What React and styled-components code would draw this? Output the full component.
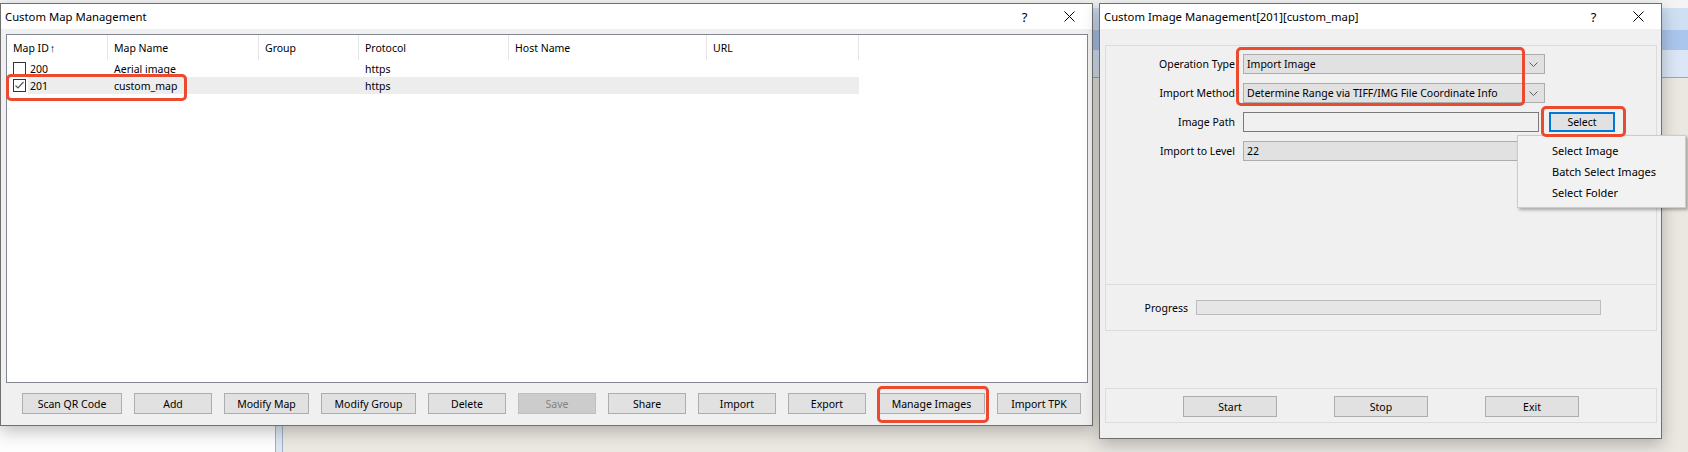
import styled, { createGlobalStyle } from 'styled-components'

const GlobalStyle = createGlobalStyle`
  html, body {
    margin: 0;
    padding: 0;
  }
  body {
    width: 1688px;
    height: 452px;
    overflow: hidden;
    font-family: 'Noto Sans', 'Liberation Sans', sans-serif;
    color: #000;
  }
`

const color = {
  face: '#f0f0f0',
  button: '#e1e1e1',
  buttonBorder: '#adadad',
  frame: '#707070',
  groupLine: '#dcdcdc',
  mark: '#eb4a2f',
  focus: '#0078d7',
}

const Desktop = styled.div`
  position: relative;
  width: 1688px;
  height: 452px;
  box-sizing: border-box;
  padding-top: 3px;
  display: flex;
  align-items: flex-start;
  gap: 6px;
  overflow: hidden;
  background:
    linear-gradient(
      to bottom,
      #f4f4f4 0 8px,
      #cfe0f5 8px 30px,
      #aac6ec 30px 50px,
      #dbe7f6 50px 77px,
      #a5a5a5 77px 78px,
      transparent 78px
    ),
    linear-gradient(
      to right,
      #fdfdfd 0 275px,
      #9fb0c6 275px 276px,
      #dbe6f2 276px 282px,
      #9fb0c6 282px 283px,
      #ebe8e2 283px
    );
`

const Window = styled.div`
  flex-shrink: 0;
  width: ${({ $width }) => $width}px;
  height: ${({ $height }) => $height}px;
  box-sizing: border-box;
  border: 1px solid ${color.frame};
  background: ${color.face};
  display: flex;
  flex-direction: column;
  box-shadow: 0 5px 16px rgba(0, 0, 0, 0.26);
`

const TitleBar = styled.div`
  height: 25px;
  flex-shrink: 0;
  background: #fff;
  display: flex;
  align-items: center;
  padding-left: 4px;
  font-size: 11.3px;
`

const TitleText = styled.span`
  flex: 1;
  white-space: nowrap;
`

const CaptionButton = styled.div`
  width: 45px;
  height: 25px;
  display: flex;
  align-items: center;
  justify-content: center;
  font-size: 13px;
`

// ---- Custom Map Management ----

const MapBody = styled.div`
  flex: 1;
  display: flex;
  flex-direction: column;
  padding: 5px 4px 0 5px;
`

const Table = styled.div`
  height: 349px;
  box-sizing: border-box;
  border: 1px solid #828790;
  background: #fff;
  font-size: 10.5px;
`

const HeaderRow = styled.div`
  display: grid;
  grid-template-columns: ${({ $cols }) => $cols};
  height: 25px;
`

const HeaderCell = styled.div`
  display: flex;
  align-items: center;
  padding-left: 6px;
  border-right: 1px solid #e5e5e5;
  white-space: nowrap;
`

const SortArrow = styled.span`
  font-size: 11px;
  line-height: 1;
  margin-left: 1px;
  color: #222;
`

const Row = styled.div`
  position: relative;
  display: grid;
  grid-template-columns: ${({ $cols }) => $cols};
  height: 17px;
`

const Cell = styled.div`
  display: flex;
  align-items: center;
  padding-left: 6px;
  background: ${({ $selected }) => ($selected ? '#ededed' : 'transparent')};
  white-space: nowrap;
`

const FirstCell = styled.div`
  display: flex;
  align-items: center;
  padding-left: 6px;
`

const CheckBox = styled.span`
  width: 13px;
  height: 13px;
  box-sizing: border-box;
  border: 1px solid #333;
  background: #fff;
  display: flex;
  align-items: center;
  justify-content: center;
  flex-shrink: 0;
`

const IdText = styled.span`
  flex: 1;
  align-self: stretch;
  display: flex;
  align-items: center;
  margin-left: 2px;
  padding-left: 2px;
  background: ${({ $selected }) => ($selected ? '#ededed' : 'transparent')};
`

const ButtonRow = styled.div`
  display: flex;
  gap: 12px;
  padding-left: 16px;
  margin-top: 10px;
`

const PushButton = styled.button`
  width: ${({ $width }) => $width}px;
  height: 21px;
  box-sizing: border-box;
  padding: 0;
  border: 1px solid ${color.buttonBorder};
  background: ${color.button};
  font-family: 'Noto Sans', 'Liberation Sans', sans-serif;
  font-size: 10.5px;
  color: #000;
  flex-shrink: 0;

  &:disabled {
    background: #cccccc;
    border-color: #bfbfbf;
    color: #838383;
  }
`

const Marked = styled.span`
  position: relative;
  display: inline-flex;
`

// red annotation outline drawn over a control
const MarkBox = styled.span`
  position: absolute;
  left: ${({ $l }) => $l}px;
  top: ${({ $t }) => $t}px;
  width: ${({ $w }) => $w}px;
  height: ${({ $h }) => $h}px;
  box-sizing: border-box;
  border: 3px solid ${color.mark};
  border-radius: 5px;
  z-index: 5;
  pointer-events: none;
`

// ---- Custom Image Management ----

const ImageBody = styled.div`
  flex: 1;
  display: flex;
  flex-direction: column;
  padding: 16px 4px 0 5px;
  font-size: 10.5px;
`

const GroupBox = styled.div`
  position: relative;
  box-sizing: border-box;
  border: 1px solid ${color.groupLine};
  height: ${({ $height }) => $height}px;
  margin-top: ${({ $gap = 0 }) => $gap}px;
`

const FormGrid = styled.div`
  display: grid;
  grid-template-columns: 129px auto;
  grid-auto-rows: 20px;
  column-gap: 8px;
  row-gap: 9px;
  padding-top: 8px;
`

const Label = styled.div`
  display: flex;
  align-items: center;
  justify-content: flex-end;
  white-space: nowrap;
`

const Combo = styled.div`
  width: ${({ $width = 302 }) => $width}px;
  height: 20px;
  box-sizing: border-box;
  border: 1px solid ${color.buttonBorder};
  background: ${color.button};
  display: flex;
  align-items: center;
  padding: 0 6px 0 3px;
`

const ComboText = styled.span`
  flex: 1;
  white-space: nowrap;
`

const PathField = styled.div`
  display: flex;
  align-items: center;
  gap: 10px;
`

const LineEdit = styled.div`
  width: 296px;
  height: 20px;
  box-sizing: border-box;
  border: 1px solid #7a7a7a;
  background: ${color.face};
`

const SelectButton = styled(PushButton)`
  height: 20px;
  border: 2px solid ${color.focus};
`

const PopupMenu = styled.div`
  position: absolute;
  left: -32px;
  top: 23px;
  width: 169px;
  box-sizing: border-box;
  padding: 4px 0 4px;
  background: #f2f2f2;
  border: 1px solid #cccccc;
  box-shadow: 2px 2px 3px rgba(0, 0, 0, 0.3);
  z-index: 4;
`

const MenuItem = styled.div`
  height: 21px;
  line-height: 21px;
  padding-left: 34px;
  font-size: 11px;
  white-space: nowrap;
`

const ProgressRow = styled.div`
  height: 100%;
  display: flex;
  align-items: center;
  gap: 8px;
`

const ProgressLabel = styled.span`
  width: 82px;
  text-align: right;
`

const ProgressTrack = styled.div`
  width: 405px;
  height: 15px;
  box-sizing: border-box;
  border: 1px solid #bcbcbc;
  background: #e6e6e6;
`

const ActionRow = styled.div`
  display: flex;
  justify-content: center;
  gap: 57px;
  padding-top: 7px;
`

function Chevron() {
  return (
    <svg width="9" height="5" viewBox="0 0 9 5">
      <polyline
        points="0.5,0.5 4.5,4.5 8.5,0.5"
        fill="none"
        stroke="#606060"
        strokeWidth="1"
      />
    </svg>
  )
}

function CloseGlyph() {
  return (
    <svg width="11" height="11" viewBox="0 0 11 11">
      <path d="M0.5 0.5 L10.5 10.5 M10.5 0.5 L0.5 10.5" stroke="#000" strokeWidth="1" />
    </svg>
  )
}

function Tick() {
  return (
    <svg width="11" height="11" viewBox="0 0 11 11">
      <polyline
        points="1.5,5.5 4,8 9.5,2"
        fill="none"
        stroke="#555"
        strokeWidth="1.2"
      />
    </svg>
  )
}

function Caption({ title }) {
  return (
    <TitleBar>
      <TitleText>{title}</TitleText>
      <CaptionButton>?</CaptionButton>
      <CaptionButton>
        <CloseGlyph />
      </CaptionButton>
    </TitleBar>
  )
}

const columns = [
  { title: 'Map ID', width: 101, sorted: true },
  { title: 'Map Name', width: 151 },
  { title: 'Group', width: 100 },
  { title: 'Protocol', width: 150 },
  { title: 'Host Name', width: 198 },
  { title: 'URL', width: 152 },
]
const gridCols = columns.map((c) => `${c.width}px`).join(' ')

const maps = [
  { id: '200', name: 'Aerial image', group: '', protocol: 'https', host: '', url: '', checked: false },
  { id: '201', name: 'custom_map', group: '', protocol: 'https', host: '', url: '', checked: true },
]

const mapButtons = [
  { label: 'Scan QR Code', width: 100 },
  { label: 'Add', width: 78 },
  { label: 'Modify Map', width: 85 },
  { label: 'Modify Group', width: 95 },
  { label: 'Delete', width: 78 },
  { label: 'Save', width: 78, disabled: true },
  { label: 'Share', width: 78 },
  { label: 'Import', width: 78 },
  { label: 'Export', width: 78 },
  { label: 'Manage Images', width: 107, marked: true },
  { label: 'Import TPK', width: 84 },
]

function MapTable() {
  return (
    <Table>
      <HeaderRow $cols={gridCols}>
        {columns.map((col) => (
          <HeaderCell key={col.title}>
            {col.title}
            {col.sorted && <SortArrow>↑</SortArrow>}
          </HeaderCell>
        ))}
      </HeaderRow>
      {maps.map((m) => (
        <Row key={m.id} $cols={gridCols}>
          <FirstCell>
            <CheckBox>{m.checked && <Tick />}</CheckBox>
            <IdText $selected={m.checked}>{m.id}</IdText>
          </FirstCell>
          <Cell $selected={m.checked}>{m.name}</Cell>
          <Cell $selected={m.checked}>{m.group}</Cell>
          <Cell $selected={m.checked}>{m.protocol}</Cell>
          <Cell $selected={m.checked}>{m.host}</Cell>
          <Cell $selected={m.checked}>{m.url}</Cell>
          {m.checked && <MarkBox $l={-1} $t={-3} $w={181} $h={27} />}
        </Row>
      ))}
    </Table>
  )
}

function MapManager() {
  return (
    <Window $width={1093} $height={423}>
      <Caption title="Custom Map Management" />
      <MapBody>
        <MapTable />
        <ButtonRow>
          {mapButtons.map((b) =>
            b.marked ? (
              <Marked key={b.label}>
                <PushButton $width={b.width}>{b.label}</PushButton>
                <MarkBox $l={-1} $t={-7} $w={112} $h={37} />
              </Marked>
            ) : (
              <PushButton key={b.label} $width={b.width} disabled={b.disabled}>
                {b.label}
              </PushButton>
            )
          )}
        </ButtonRow>
      </MapBody>
    </Window>
  )
}

function ImageManager() {
  return (
    <Window $width={563} $height={436}>
      <Caption title="Custom Image Management[201][custom_map]" />
      <ImageBody>
        <GroupBox $height={240}>
          <FormGrid>
            <Label>Operation Type</Label>
            <Combo>
              <ComboText>Import Image</ComboText>
              <Chevron />
            </Combo>
            <Label>Import Method</Label>
            <Combo>
              <ComboText>Determine Range via TIFF/IMG File Coordinate Info</ComboText>
              <Chevron />
            </Combo>
            <Label>Image Path</Label>
            <PathField>
              <LineEdit />
              <Marked>
                <SelectButton $width={66}>Select</SelectButton>
                <MarkBox $l={-8} $t={-6} $w={85} $h={31} />
                <PopupMenu>
                  <MenuItem>Select Image</MenuItem>
                  <MenuItem>Batch Select Images</MenuItem>
                  <MenuItem>Select Folder</MenuItem>
                </PopupMenu>
              </Marked>
            </PathField>
            <Label>Import to Level</Label>
            <Combo>
              <ComboText>22</ComboText>
              <Chevron />
            </Combo>
          </FormGrid>
          <MarkBox $l={130} $t={1} $w={289} $h={59} />
        </GroupBox>
        <GroupBox $height={47} $gap={-1}>
          <ProgressRow>
            <ProgressLabel>Progress</ProgressLabel>
            <ProgressTrack />
          </ProgressRow>
        </GroupBox>
        <GroupBox $height={35} $gap={57}>
          <ActionRow>
            <PushButton $width={94}>Start</PushButton>
            <PushButton $width={94}>Stop</PushButton>
            <PushButton $width={94}>Exit</PushButton>
          </ActionRow>
        </GroupBox>
      </ImageBody>
    </Window>
  )
}

export default function App() {
  return (
    <>
      <GlobalStyle />
      <Desktop>
        <MapManager />
        <ImageManager />
      </Desktop>
    </>
  )
}
